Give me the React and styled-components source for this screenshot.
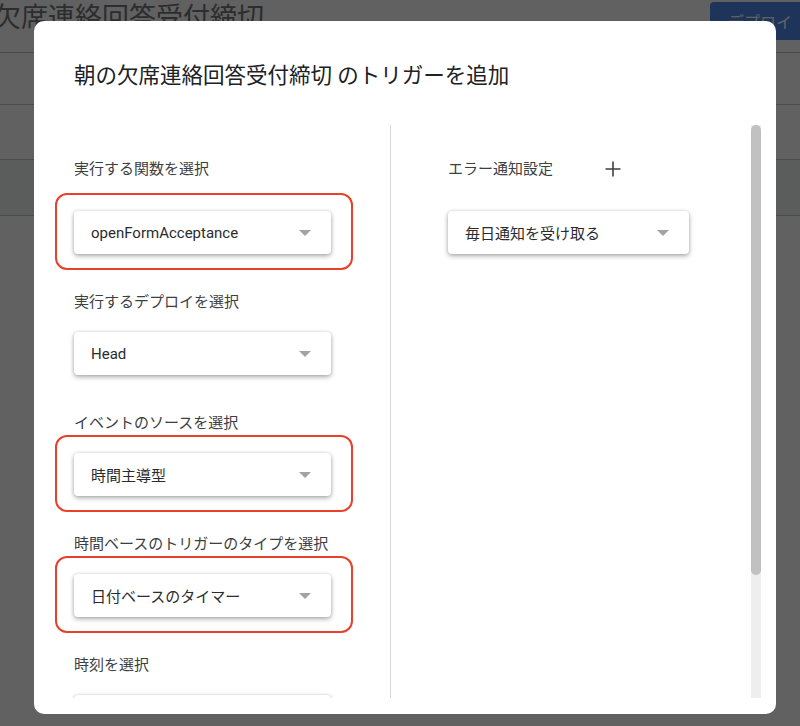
import React from 'react'
import styled, { createGlobalStyle } from 'styled-components'

const GlobalStyle = createGlobalStyle`
  html, body {
    margin: 0;
    padding: 0;
    overflow: hidden;
  }
  body {
    font-family: Roboto, "Noto Sans CJK JP", sans-serif;
    background: #fff;
  }
`

const Page = styled.div`
  position: relative;
  width: 800px;
  height: 726px;
  overflow: hidden;
  background: #fff;
`

/* page behind the dialog */
const TopBar = styled.header`
  display: flex;
  align-items: flex-start;
  justify-content: space-between;
  height: 53px;
  box-sizing: border-box;
  border-bottom: 1px solid #c3c6ca;
`

const ProjectTitle = styled.h1`
  margin: 0 0 0 -6px;
  font-size: 27px;
  font-weight: 400;
  line-height: 36px;
  color: #72767b;
  white-space: nowrap;
`

const DeployButton = styled.button`
  margin-top: 2px;
  width: 90px;
  height: 38px;
  padding: 0 0 0 18px;
  border: none;
  border-radius: 4px 0 0 4px;
  background: #5289ee;
  color: #fff;
  font-family: inherit;
  font-size: 16px;
  text-align: left;
`

const Row = styled.div`
  height: ${p => p.$h}px;
  box-sizing: border-box;
  border-bottom: 1px solid #c3c6ca;
  background: ${p => (p.$shade ? '#f0f1f2' : '#fff')};
`

const Scrim = styled.div`
  position: absolute;
  inset: 0;
  background: rgba(0, 0, 0, 0.62);
`

/* dialog */
const Dialog = styled.div`
  position: absolute;
  left: 34px;
  top: 21px;
  width: 742px;
  height: 693px;
  display: flex;
  flex-direction: column;
  background: #fff;
  border-radius: 10px;
  overflow: hidden;
`

const DialogTitle = styled.h2`
  margin: 0;
  padding: 41px 40px 35px;
  font-size: 21.5px;
  font-weight: 400;
  line-height: 28px;
  color: #202124;
  white-space: nowrap;
`

const Body = styled.div`
  flex: 1;
  min-height: 0;
  display: flex;
  padding-bottom: 16px;
`

const LeftColumn = styled.div`
  width: 316px;
  padding: 34px 0 0 40px;
  border-right: 1px solid #d6d8db;
  overflow: hidden;
`

const RightColumn = styled.div`
  flex: 1;
  padding: 34px 0 0 57px;
`

const Scrollbar = styled.div`
  width: 10px;
  margin-right: 15px;
  display: flex;
  flex-direction: column;
  background: #eeeeee;
`

const Thumb = styled.div`
  height: 450px;
  border-radius: 5px;
  background: #c1c1c1;
`

const Field = styled.div`
  display: flex;
  flex-direction: column;
  align-items: flex-start;
  margin-bottom: 38px;
`

const Label = styled.div`
  font-size: 15px;
  line-height: 20px;
  color: #3c4043;
  margin-bottom: ${p => (p.$first ? 32 : 20)}px;
  white-space: nowrap;
`

const LabelRow = styled.div`
  display: flex;
  align-items: center;
  margin-bottom: 32px;

  ${Label} {
    margin-bottom: 0;
  }
`

const AddButton = styled.button`
  display: flex;
  margin-left: 52px;
  padding: 0;
  border: none;
  background: none;
`

const Select = styled.div`
  position: relative;
  width: ${p => p.$w}px;
  height: 43px;
  box-sizing: border-box;
  display: flex;
  align-items: center;
  justify-content: space-between;
  padding: 0 20px 0 17px;
  background: #fff;
  border-radius: 4px;
  box-shadow: 0 2px 5px rgba(0, 0, 0, 0.32), 0 0 3px rgba(0, 0, 0, 0.12);
  font-size: 15px;
  color: #2a2b2d;
  white-space: nowrap;

  ${p => p.$marked && `
    &::after {
      content: '';
      position: absolute;
      inset: -18px -22px -16px -19px;
      border: 2px solid #e8402a;
      border-radius: 12px;
      pointer-events: none;
    }
  `}
`

const Caret = styled.span`
  width: 0;
  height: 0;
  border-left: 6px solid transparent;
  border-right: 6px solid transparent;
  border-top: 6px solid #a3a3a3;
`

function Dropdown({ value, width = 257, marked }) {
  return (
    <Select $w={width} $marked={marked}>
      <span>{value}</span>
      <Caret />
    </Select>
  )
}

const fields = [
  { label: '実行する関数を選択', value: 'openFormAcceptance', marked: true },
  { label: '実行するデプロイを選択', value: 'Head' },
  { label: 'イベントのソースを選択', value: '時間主導型', marked: true },
  { label: '時間ベースのトリガーのタイプを選択', value: '日付ベースのタイマー', marked: true },
  { label: '時刻を選択', value: '' },
]

export default function App() {
  return (
    <Page>
      <GlobalStyle />
      <TopBar>
        <ProjectTitle>欠席連絡回答受付締切</ProjectTitle>
        <DeployButton>デプロイ</DeployButton>
      </TopBar>
      <Row $h={52} />
      <Row $h={55} />
      <Row $h={56} $shade />

      <Scrim />
      <Dialog>
        <DialogTitle>朝の欠席連絡回答受付締切 のトリガーを追加</DialogTitle>
        <Body>
          <LeftColumn>
            {fields.map((f, i) => (
              <Field key={f.label}>
                <Label $first={i === 0}>{f.label}</Label>
                <Dropdown value={f.value} marked={f.marked} />
              </Field>
            ))}
          </LeftColumn>
          <RightColumn>
            <LabelRow>
              <Label>エラー通知設定</Label>
              <AddButton>
                <svg width="16" height="16" viewBox="0 0 16 16">
                  <path d="M8 0.5v15M0.5 8h15" stroke="#3c4043" strokeWidth="1.6" fill="none" />
                </svg>
              </AddButton>
            </LabelRow>
            <Dropdown value="毎日通知を受け取る" width={241} />
          </RightColumn>
          <Scrollbar>
            <Thumb />
          </Scrollbar>
        </Body>
      </Dialog>
    </Page>
  )
}
